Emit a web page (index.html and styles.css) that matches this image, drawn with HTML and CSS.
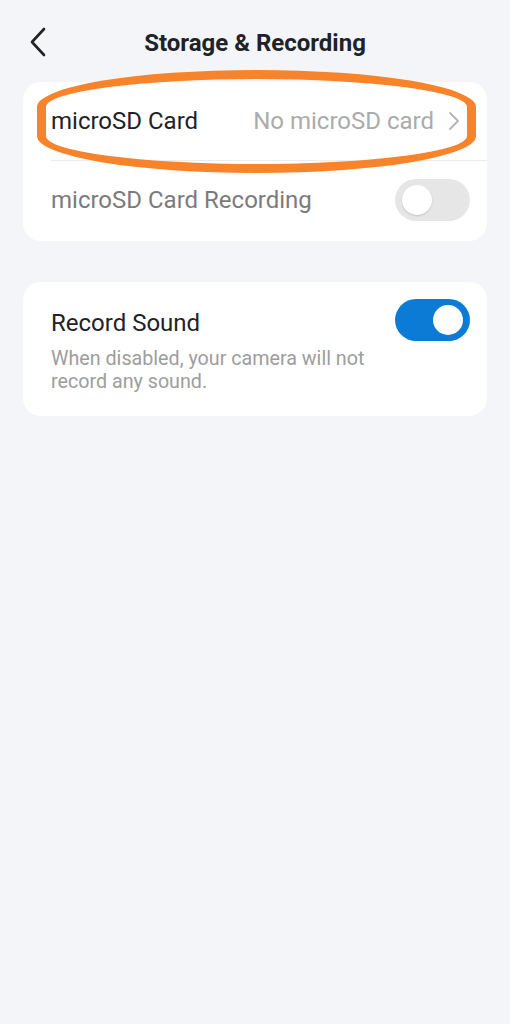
FILE: index.html
```html
<!DOCTYPE html>
<html lang="en">
<head>
    <meta charset="UTF-8">
    <meta name="viewport" content="width=device-width, initial-scale=1.0">
    <title>Storage &amp; Recording</title>
    <link rel="stylesheet" href="styles.css">
</head>
<body>
    <div class="header">
        <button class="back">
            <svg width="20" height="30" viewBox="0 0 20 30">
                <path d="M16 2 L4 15 L16 28" fill="none" stroke="#222" stroke-width="2.6" stroke-linecap="round" stroke-linejoin="round"/>
            </svg>
        </button>
        <h1>Storage &amp; Recording</h1>
    </div>

    <div class="card first">
        <div class="row link">
            <span class="label">microSD Card</span>
            <span class="value">No microSD card</span>
            <svg class="chev" width="12" height="20" viewBox="0 0 12 20">
                <path d="M2 2 L10 10 L2 18" fill="none" stroke="#b4b4b4" stroke-width="1.8" stroke-linecap="round" stroke-linejoin="round"/>
            </svg>
        </div>
        <div class="row">
            <span class="label disabled">microSD Card Recording</span>
            <div class="toggle"><div class="knob"></div></div>
        </div>
        <div class="mark"></div>
    </div>

    <div class="card">
        <div class="row sound">
            <div class="text">
                <span class="label">Record Sound</span>
                <p class="desc">When disabled, your camera will not record any sound.</p>
            </div>
            <div class="toggle on"><div class="knob"></div></div>
        </div>
    </div>
</body>
</html>
```

FILE: styles.css
```css
body {
    margin: 0;
    background-color: #f4f5f9;
    font-family: Roboto, "Noto Sans", sans-serif;
    color: #222;
}
.header {
    position: relative;
    height: 82px;
    display: flex;
    align-items: center;
    justify-content: center;
}
.header h1 {
    margin: 0;
    font-size: 24px;
    font-weight: bold;
    color: #1f2226;
    padding-top: 4px;
}
.back {
    position: absolute;
    left: 28px;
    top: 27px;
    background: none;
    border: none;
    padding: 0;
}
.card {
    position: relative;
    background-color: #fff;
    margin: 0 23px 41px 23px;
    border-radius: 18px;
}
.card.first {
    padding-bottom: 2px;
}
.row {
    display: flex;
    align-items: center;
    height: 78px;
    padding: 0 17px 0 28px;
}
.row.link {
    border-bottom: 1px solid #ececec;
    margin-left: 28px;
    padding-left: 0;
    padding-right: 27px;
}
.label {
    font-size: 24px;
    color: #1f2226;
    flex: 1;
}
.label.disabled {
    color: #7b7b7b;
}
.value {
    font-size: 24px;
    color: #ababab;
    margin-right: 14px;
}
.toggle {
    width: 75px;
    height: 42px;
    border-radius: 21px;
    background-color: #e6e6e6;
    position: relative;
}
.knob {
    position: absolute;
    top: 6px;
    left: 7px;
    width: 30px;
    height: 30px;
    border-radius: 50%;
    background-color: #fff;
    box-shadow: 0 1px 2px rgba(0, 0, 0, 0.15);
}
.toggle.on {
    background-color: #0b7bd6;
}
.toggle.on .knob {
    left: auto;
    right: 7px;
    box-shadow: none;
}
.row.sound {
    height: auto;
    align-items: flex-start;
    padding-top: 17px;
    padding-bottom: 23px;
}
.sound .text {
    flex: 1;
    padding-top: 10px;
}
.sound .label {
    display: block;
    line-height: 28px;
}
.desc {
    margin: 10px 0 0 0;
    font-size: 19.7px;
    line-height: 23px;
    color: #9d9d9d;
    max-width: 330px;
}
.mark {
    position: absolute;
    left: 14px;
    top: -12px;
    width: 421px;
    height: 85px;
    border: 9px solid #f7832a;
    border-radius: 50% / 36%;
}
```
